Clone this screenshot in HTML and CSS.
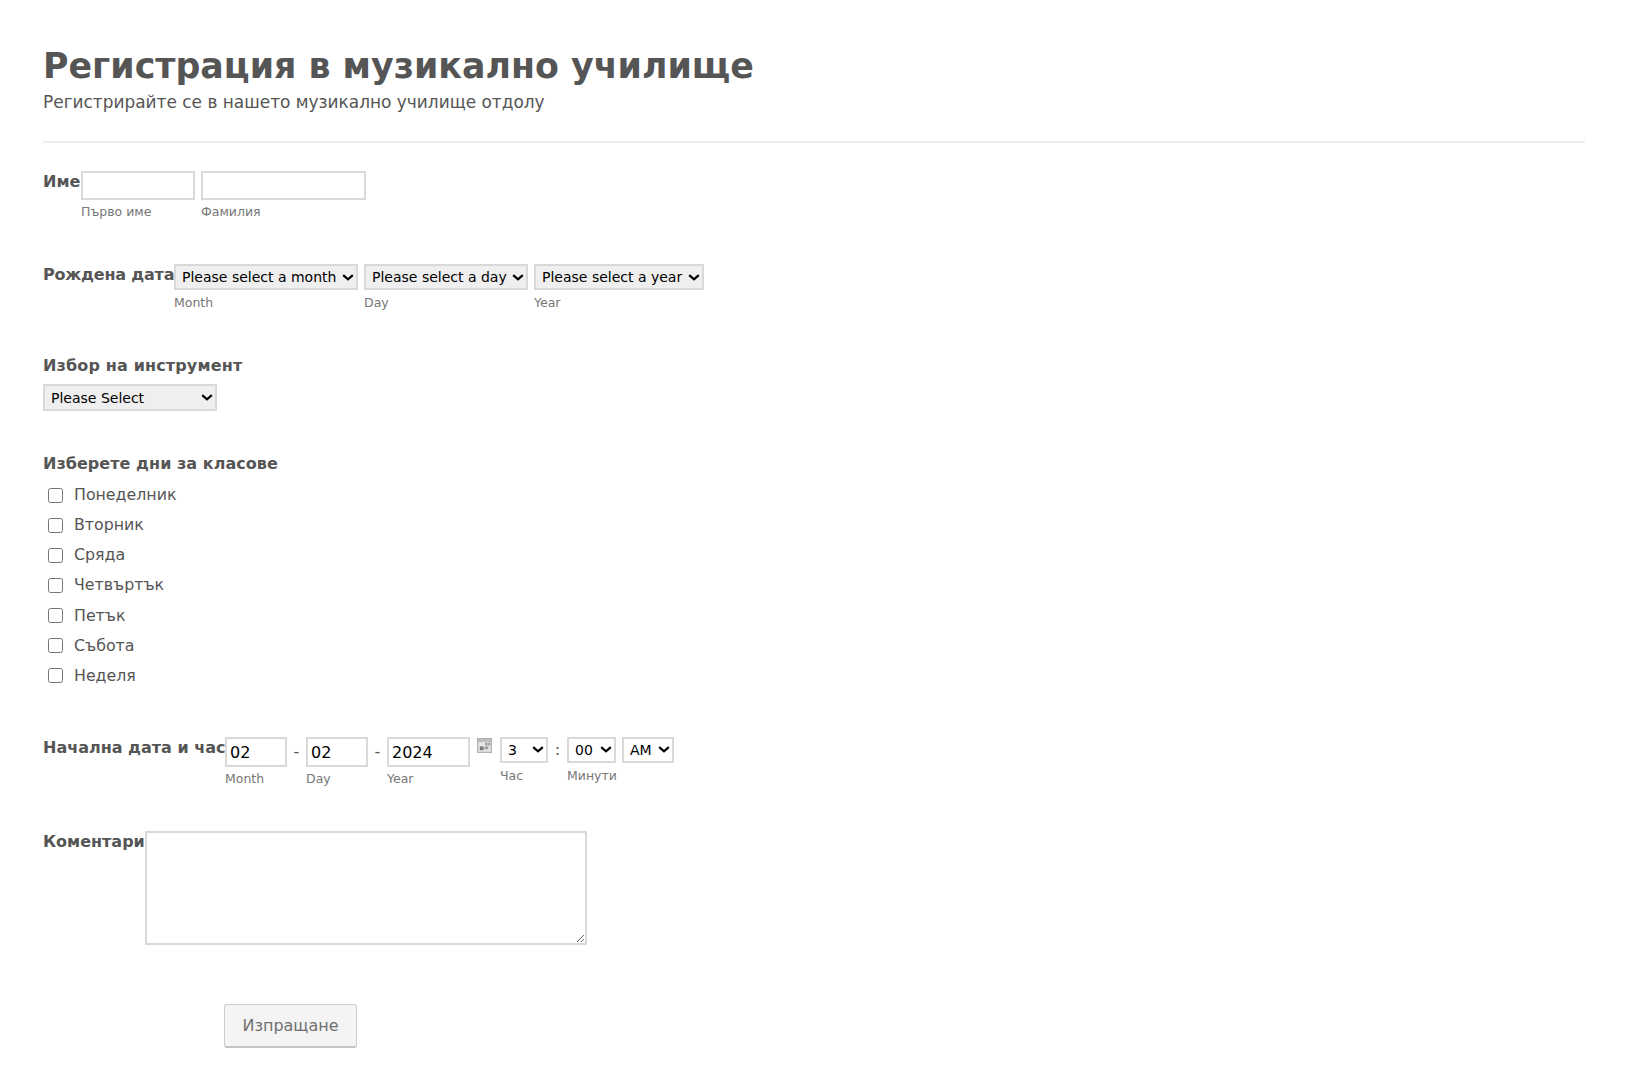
FILE: index.html
```html
<!DOCTYPE html>
<html lang="bg">
<head>
<meta charset="utf-8">
<title>Регистрация в музикално училище</title>
<link rel="stylesheet" href="styles.css">
</head>
<body>
<form class="form">
  <header class="head">
    <h1 class="title">Регистрация в музикално училище</h1>
    <p class="subtitle">Регистрирайте се в нашето музикално училище отдолу</p>
  </header>

  <div class="line line-name">
    <label class="label">Име</label>
    <div class="fields">
      <span class="sub"><input class="text w-first" type="text"><small class="hint">Първо име</small></span>
      <span class="sub"><input class="text w-last" type="text"><small class="hint">Фамилия</small></span>
    </div>
  </div>

  <div class="line line-birth">
    <label class="label">Рождена дата</label>
    <div class="fields">
      <span class="sub"><select class="drop w-month"><option>Please select a month</option></select><small class="hint">Month</small></span>
      <span class="sub"><select class="drop w-day"><option>Please select a day</option></select><small class="hint">Day</small></span>
      <span class="sub"><select class="drop w-year"><option>Please select a year</option></select><small class="hint">Year</small></span>
    </div>
  </div>

  <div class="stack line-inst">
    <label class="label">Избор на инструмент</label>
    <select class="drop drop-inst"><option>Please Select</option></select>
  </div>

  <div class="stack line-days">
    <label class="label">Изберете дни за класове</label>
    <ul class="checks">
      <li class="check"><input class="box" type="checkbox"><span>Понеделник</span></li>
      <li class="check"><input class="box" type="checkbox"><span>Вторник</span></li>
      <li class="check"><input class="box" type="checkbox"><span>Сряда</span></li>
      <li class="check"><input class="box" type="checkbox"><span>Четвъртък</span></li>
      <li class="check"><input class="box" type="checkbox"><span>Петък</span></li>
      <li class="check"><input class="box" type="checkbox"><span>Събота</span></li>
      <li class="check"><input class="box" type="checkbox"><span>Неделя</span></li>
    </ul>
  </div>

  <div class="line line-start">
    <label class="label">Начална дата и час</label>
    <div class="fields fields-date">
      <span class="sub"><input class="text date w-mm" type="text" value="02"><small class="hint">Month</small></span>
      <span class="sep">-</span>
      <span class="sub"><input class="text date w-dd" type="text" value="02"><small class="hint">Day</small></span>
      <span class="sep">-</span>
      <span class="sub"><input class="text date w-yy" type="text" value="2024"><small class="hint">Year</small></span>
      <svg class="cal" width="16" height="16" viewBox="0 0 16 16" aria-hidden="true">
        <rect x="0.5" y="0.5" width="15" height="15" fill="#d6d6d6" stroke="#aeaeae"/>
        <rect x="1" y="1" width="14" height="3" fill="#bcbcbc"/>
        <rect x="2" y="5" width="12" height="9" fill="#e6e6e6"/>
        <rect x="9" y="5" width="2" height="3" fill="#8a8a8a"/>
        <rect x="12" y="5" width="2" height="3" fill="#9a9a9a"/>
        <rect x="3" y="9" width="4" height="4" fill="#777"/>
        <rect x="8" y="9" width="4" height="3" fill="#999"/>
      </svg>
      <span class="sub sub-hour"><select class="drop time w-h"><option>3</option></select><small class="hint hint-time">Час</small></span>
      <span class="sep sep-time">:</span>
      <span class="sub"><select class="drop time w-m"><option>00</option></select><small class="hint hint-time">Минути</small></span>
      <span class="sub sub-ampm"><select class="drop time w-a"><option>AM</option></select></span>
    </div>
  </div>

  <div class="line line-comment">
    <label class="label">Коментари</label>
    <textarea class="area"></textarea>
  </div>

  <div class="actions">
    <button class="send" type="button">Изпращане</button>
  </div>
</form>
</body>
</html>
```
FILE: styles.css
```css
* { box-sizing: border-box; }
html, body { margin: 0; padding: 0; background: #fff; }
body {
  font-family: "DejaVu Sans", Verdana, sans-serif;
  color: #555;
  font-size: 16px;
}
.form { padding: 45px 43px 0; width: 1628px; height: 1090px; overflow: hidden; }
.head { border-bottom: 2px solid #eee; height: 98px; }
.title { margin: 0; font-size: 34.8px; line-height: 42px; font-weight: 700; color: #555; }
.subtitle { margin: 5px 0 0; font-size: 16.95px; line-height: 20px; color: #555; }

.label { font-weight: 700; font-size: 16px; line-height: 20px; color: #555; white-space: nowrap; }
.line { display: flex; align-items: flex-start; }
.fields { display: flex; align-items: flex-start; gap: 6px; }
.sub { display: flex; flex-direction: column; }
.hint { display: block; font-size: 12.5px; line-height: 15px; color: #777; margin-top: 4px; }

.text {
  display: block;
  height: 29px;
  border: 2px solid #d9d9d9;
  background: #fff;
  padding: 0 3px;
  margin: 0;
  font-family: inherit;
  font-size: 16px;
  color: #000;
  outline: none;
}
.w-first { width: 114px; }
.w-last { width: 165px; }
.drop {
  display: block;
  appearance: none;
  -webkit-appearance: none;
  height: 26px;
  margin: 0;
  border: 2px solid #d9d9d9;
  background-color: #efefef;
  background-image: url("data:image/svg+xml,%3Csvg xmlns='http://www.w3.org/2000/svg' width='12' height='7' viewBox='0 0 12 7'%3E%3Cpath d='M1.2 1.2 6 5.4 10.8 1.2' fill='none' stroke='%23000' stroke-width='2.2'/%3E%3C/svg%3E");
  background-repeat: no-repeat;
  background-position: right 2px center;
  background-size: 12px 7px;
  font-family: inherit;
  font-size: 14px;
  color: #000;
  padding: 0 16px 0 6px;
  border-radius: 0;
}
.w-month { width: 184px; }
.w-day { width: 164px; }
.w-year { width: 170px; }

.line-name { margin-top: 28px; }
.line-name .label { margin-top: 1px; width: 38px; }
.line-birth { margin-top: 45px; }
.line-birth .label { margin-top: 1px; width: 131px; letter-spacing: -0.2px; }
.line-birth .hint { margin-top: 5px; }
.line-inst { margin-top: 46px; }
.line-inst .label { letter-spacing: 0.15px; }
.stack { display: flex; flex-direction: column; align-items: flex-start; }
.drop-inst { width: 174px; height: 27px; margin-top: 8px; }
.line-days { margin-top: 43px; }
.line-days .label { letter-spacing: 0.04px; }
.checks { list-style: none; margin: 6px 0 0; padding: 0; }
.check { display: flex; align-items: center; height: 30.15px; line-height: 20px; color: #555; font-size: 15.8px; }
.box { width: 15px; height: 15px; margin: 0 0 0 5px; flex: none; }
.check span { margin-left: 11px; }

.line-start { margin-top: 46px; }
.line-start .label { width: 182px; margin-top: 1px; }
.fields-date { gap: 0; }
.date { height: 30px; font-size: 16px; padding-top: 2px; }
.fields-date .hint { margin-top: 4px; }
.fields-date .hint-time { margin-top: 5px; }
.w-mm { width: 62px; }
.w-dd { width: 62px; }
.w-yy { width: 83px; }
.sep { width: 19px; text-align: center; line-height: 30px; }
.cal { margin: 1px 0 0 7px; flex: none; width: 15px; height: 15px; }
.sub-hour { margin-left: 8px; }
.sep-time { width: 19px; line-height: 26px; }
.sub-ampm { margin-left: 5px; }
.time { height: 26px; background-color: #fff; }
.w-h { width: 48px; }
.w-m { width: 49px; }
.w-a { width: 52px; }

.line-comment { margin-top: 45px; }
.line-comment .label { width: 102px; margin-top: 1px; }
.area {
  display: block;
  width: 442px;
  height: 114px;
  margin: 0;
  border: 2px solid #d9d9d9;
  background: #fff;
  outline: none;
}
.actions { padding-left: 181px; margin-top: 59px; }
.send {
  width: 133px;
  height: 44px;
  border: 1px solid #ccc;
  border-bottom: 2px solid #c4c4c4;
  border-radius: 3px;
  background: #f4f4f4;
  font-family: inherit;
  font-size: 16px;
  color: #707070;
  padding: 1px 0 0;
}
```
